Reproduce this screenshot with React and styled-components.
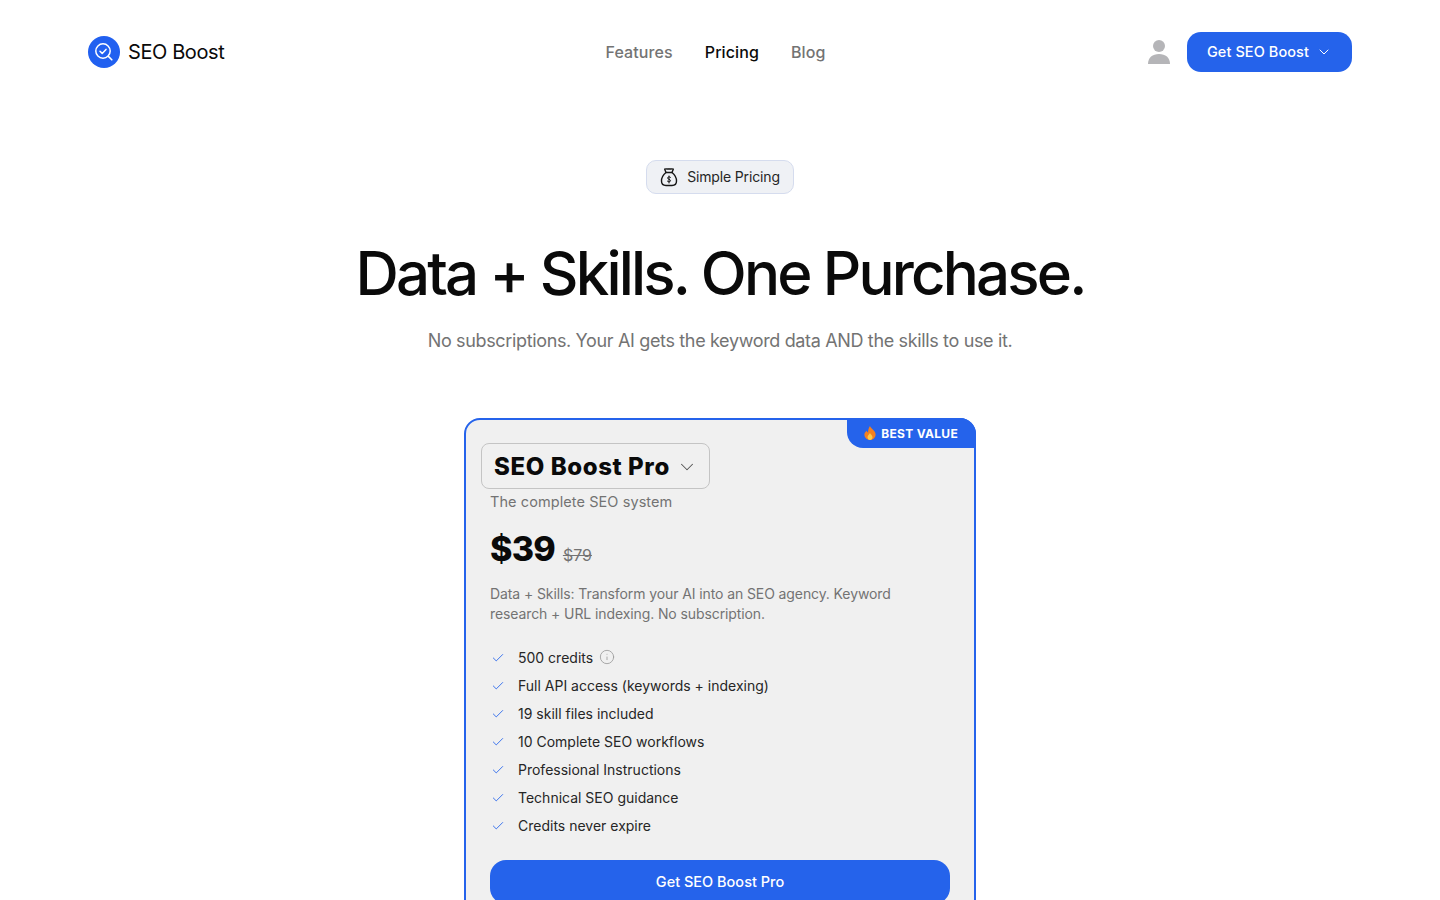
import React from 'react';
import styled, { createGlobalStyle } from 'styled-components';
import { Check, ChevronDown, Info } from 'lucide-react';

const blue = '#2563eb';

const GlobalStyle = createGlobalStyle`
  html { scrollbar-width: none; }
  body {
    margin: 0;
    background: #fff;
    color: #0a0a0a;
    font-family: Inter, "Liberation Sans", sans-serif;
  }
`;

const Header = styled.header`
  display: grid;
  grid-template-columns: 1fr auto 1fr;
  align-items: center;
  height: 40px;
  padding: 32px 88px 0;
`;

const Brand = styled.a`
  display: flex;
  align-items: center;
  gap: 8px;
  font-size: 20px;
  letter-spacing: -0.4px;
  color: #0a0a0a;
`;

const Nav = styled.nav`
  display: flex;
  gap: 32px;
  margin-right: 9px;
`;

const NavLink = styled.a`
  font-size: 16px;
  font-weight: 500;
  letter-spacing: 0.1px;
  color: ${props => (props.$active ? '#0a0a0a' : '#737373')};
`;

const HeaderActions = styled.div`
  display: flex;
  justify-content: flex-end;
  align-items: center;
  gap: 16px;
`;

const GetButton = styled.button`
  display: flex;
  align-items: center;
  gap: 7px;
  height: 40px;
  padding: 0 20px 1px;
  border: none;
  border-radius: 14px;
  background: ${blue};
  color: #fff;
  font: 500 14.5px Inter, "Liberation Sans", sans-serif;
  letter-spacing: 0.08px;
`;

const Hero = styled.section`
  display: flex;
  flex-direction: column;
  align-items: center;
  padding-top: 88px;
`;

const Pill = styled.div`
  display: flex;
  align-items: center;
  gap: 9px;
  box-sizing: border-box;
  height: 34px;
  padding: 0 13px 1px 13px;
  border: 1px solid #d5dcee;
  border-radius: 10px;
  background: #eff1f5;
  font-size: 14px;
  letter-spacing: -0.15px;
  color: #262626;
`;

const Title = styled.h1`
  margin: 42px 0 0;
  font-size: 60px;
  line-height: 75px;
  font-weight: 500;
  letter-spacing: -2.83px;
  color: #0a0a0a;
`;

const Subtitle = styled.p`
  margin: 16px 0 0;
  font-size: 18px;
  line-height: 28px;
  letter-spacing: -0.35px;
  color: #737373;
`;

const Card = styled.article`
  position: relative;
  box-sizing: border-box;
  width: 512px;
  margin: 63px auto 0;
  padding: 23px 24px 24px;
  border: 2px solid ${blue};
  border-radius: 16px;
  background: #f0f0f0;
`;

const Badge = styled.div`
  position: absolute;
  top: -2px;
  right: -2px;
  display: flex;
  align-items: center;
  gap: 5px;
  height: 30px;
  padding: 0 18px 0 17px;
  border-radius: 0 16px 0 16px;
  background: ${blue};
  color: #fff;
  font-size: 12px;
  font-weight: 700;
  letter-spacing: 0.3px;
`;

const PlanSelect = styled.div`
  display: inline-flex;
  align-items: center;
  gap: 6px;
  box-sizing: border-box;
  height: 46px;
  margin-left: -9px;
  padding: 1px 11px 0 12px;
  border: 1px solid #c4c4c4;
  border-radius: 8px;
  font-size: 24px;
  font-weight: 800;
  letter-spacing: 0.6px;
  color: #0a0a0a;
`;

const Tagline = styled.p`
  margin: 3px 0 0;
  font-size: 14.5px;
  line-height: 20px;
  letter-spacing: 0.08px;
  color: #737373;
`;

const PriceRow = styled.div`
  display: flex;
  align-items: baseline;
  gap: 8px;
  margin-top: 12px;
`;

const Price = styled.span`
  font-size: 34px;
  line-height: 50px;
  font-weight: 800;
  letter-spacing: -0.8px;
  color: #0a0a0a;
`;

const OldPrice = styled.span`
  font-size: 16px;
  color: #737373;
  text-decoration: line-through;
`;

const Description = styled.p`
  width: 420px;
  margin: 10px 0 0;
  font-size: 14px;
  line-height: 20px;
  letter-spacing: -0.1px;
  color: #737373;
`;

const Features = styled.ul`
  display: flex;
  flex-direction: column;
  gap: 8px;
  margin: 23px 0 0;
  padding: 0;
  list-style: none;
`;

const Feature = styled.li`
  display: flex;
  align-items: center;
  gap: 6px;
  height: 20px;
  font-size: 14px;
  color: #262626;
`;

const FeatureCheck = styled.span`
  display: flex;
  justify-content: center;
  width: 16px;
  margin-right: 6px;
  padding-top: 2px;
  color: ${blue};
`;

const BuyButton = styled.button`
  display: block;
  width: 100%;
  height: 44px;
  margin-top: 25px;
  padding-bottom: 2px;
  border: none;
  border-radius: 16px;
  background: ${blue};
  color: #fff;
  font: 500 14.5px Inter, "Liberation Sans", sans-serif;
`;

const features = [
  '500 credits',
  'Full API access (keywords + indexing)',
  '19 skill files included',
  '10 Complete SEO workflows',
  'Professional Instructions',
  'Technical SEO guidance',
  'Credits never expire',
];

const LogoIcon = () => (
  <svg width="32" height="32" viewBox="0 0 32 32" fill="none">
    <circle cx="16" cy="16" r="16" fill="#2160f0" />
    <circle cx="15" cy="15" r="7.2" stroke="#fff" strokeWidth="1.5" />
    <path d="M12 15.2l2.2 2.2 3.8-4" stroke="#fff" strokeWidth="1.5" strokeLinecap="round" strokeLinejoin="round" />
    <path d="M20.4 20.4l3.4 3.4" stroke="#fff" strokeWidth="1.6" strokeLinecap="round" />
  </svg>
);

const UserIcon = () => (
  <svg width="24" height="26" viewBox="0 0 24 26" fill="#b5b5b8">
    <circle cx="12" cy="7" r="6" />
    <path d="M1 25c0-6.5 4.5-10 11-10s11 3.500 11 10z" />
  </svg>
);

const BagIcon = () => (
  <svg width="18" height="20" viewBox="0 0 18 20" fill="none" stroke="#171717" strokeWidth="1.4" strokeLinecap="round" strokeLinejoin="round">
    <path d="M6 5.500L4.700 2.200c1.500-.9 2.800.4 4.300-.4 1.500.8 2.800-.5 4.300.4L12 5.500z" />
    <path d="M6 5.500C3.500 7.500 1.500 10.500 1.500 14c0 3 2 4.500 4.500 4.500h6c2.500 0 4.500-1.500 4.500-4.500 0-3.500-2-6.500-4.500-8.500" />
    <path d="M10.500 10.300C10 9.700 8 9.500 7.600 10.800c-.4 1.700 3 1.200 2.900 3-.1 1.300-2.300 1.300-3.100.4M9 9v7" strokeWidth="1" />
  </svg>
);

const FlameIcon = () => (
  <svg width="12" height="14" viewBox="0 0 12 14">
    <path d="M6 0c.6 2.500 5.600 4.500 5.600 8.500C11.600 11.500 9 14 6 14S.4 11.500.4 8.500c0-1.800 1.400-3 2.400-3.800.2 1 .7 1.600 1.300 1.800C4 4.500 4.600 2 6 0z" fill="#f4801f" />
    <path d="M6 7c.4 1.300 2.500 2.300 2.500 4.200C8.500 12.800 7.400 14 6 14s-2.500-1.200-2.500-2.800C3.500 9.500 5.300 8.500 6 7z" fill="#fdc94a" />
  </svg>
);

const App = () => (
  <>
    <GlobalStyle />
    <Header>
      <Brand>
        <LogoIcon />
        SEO Boost
      </Brand>
      <Nav>
        <NavLink>Features</NavLink>
        <NavLink $active>Pricing</NavLink>
        <NavLink>Blog</NavLink>
      </Nav>
      <HeaderActions>
        <UserIcon />
        <GetButton>
          Get SEO Boost
          <ChevronDown size={16} strokeWidth={1.5} />
        </GetButton>
      </HeaderActions>
    </Header>
    <Hero>
      <Pill>
        <BagIcon />
        Simple Pricing
      </Pill>
      <Title>Data + Skills. One Purchase.</Title>
      <Subtitle>No subscriptions. Your AI gets the keyword data AND the skills to use it.</Subtitle>
    </Hero>
    <Card>
      <Badge>
        <FlameIcon />
        BEST VALUE
      </Badge>
      <PlanSelect>
        SEO Boost Pro
        <ChevronDown size={22} strokeWidth={1.1} color="#525252" />
      </PlanSelect>
      <Tagline>The complete SEO system</Tagline>
      <PriceRow>
        <Price>$39</Price>
        <OldPrice>$79</OldPrice>
      </PriceRow>
      <Description>
        Data + Skills: Transform your AI into an SEO agency. Keyword research + URL indexing. No subscription.
      </Description>
      <Features>
        {features.map((feature, i) => (
          <Feature key={feature}>
            <FeatureCheck>
              <Check size={14} strokeWidth={1.5} />
            </FeatureCheck>
            {feature}
            {i === 0 && <Info size={16} strokeWidth={1.25} color="#9a9a9a" />}
          </Feature>
        ))}
      </Features>
      <BuyButton>Get SEO Boost Pro</BuyButton>
    </Card>
  </>
);

export default App;
